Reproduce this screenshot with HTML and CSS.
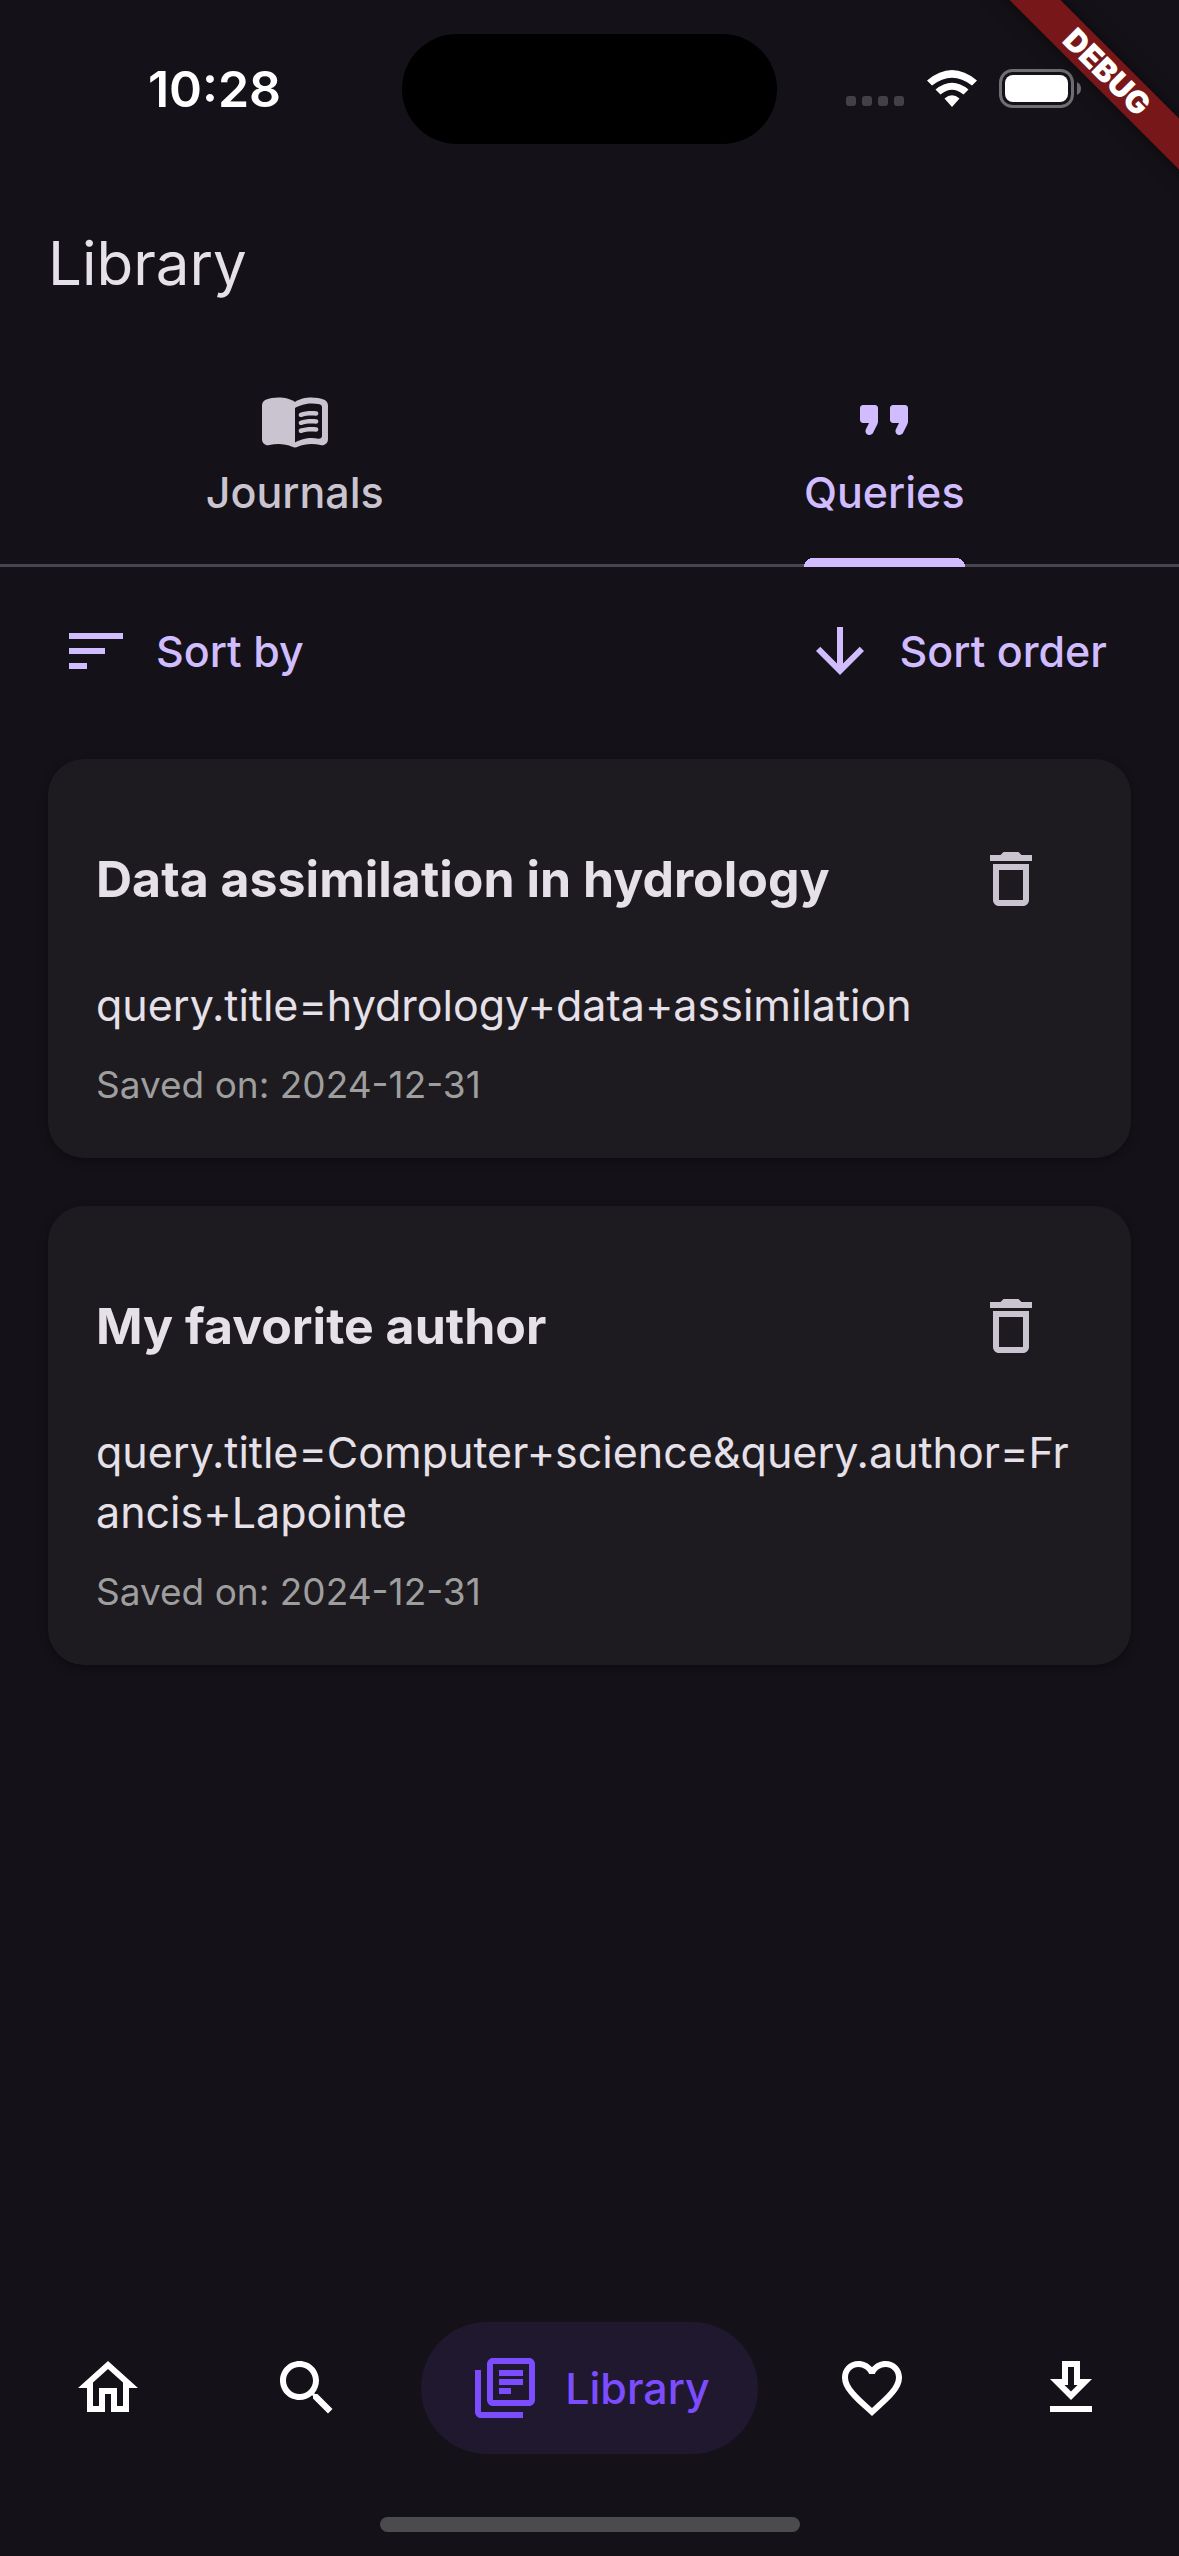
FILE: index.html
```html
<!DOCTYPE html>
<html lang="en">
<head>
<meta charset="utf-8">
<meta name="viewport" content="width=device-width, initial-scale=1">
<title>Library</title>
<link rel="stylesheet" href="styles.css">
</head>
<body>
<div class="app">
  <div class="status-bar">
    <div class="status-side"><time class="clock">10:28</time></div>
    <div class="island"></div>
    <div class="status-side status-icons">
      <span class="dots"><i></i><i></i><i></i><i></i></span>
      <svg class="wifi" viewBox="0 0 50 37" aria-hidden="true">
        <path d="M0 10.500Q25-10.500 50 10.500L45 15.500Q25 0 5 15.500Z"/>
        <path d="M8.500 19.500Q25 6 41.500 19.500L36.500 24.500Q25 15 13.500 24.500Z"/>
        <path d="M17.500 28.500Q25 22 32.500 28.500L25 37Z"/>
      </svg>
      <svg class="battery" viewBox="0 0 82 39" aria-hidden="true">
        <rect x="1.500" y="1.500" width="72" height="36" rx="12" fill="none" stroke="#6f6e72" stroke-width="3"/>
        <rect x="6" y="6" width="63" height="27" rx="8" fill="#fff"/>
        <path d="M78 13q4 2 4 6.500t-4 6.500z" fill="#6f6e72"/>
      </svg>
    </div>
  </div>
  <div class="debug-corner"><span class="debug-banner">DEBUG</span></div>

  <header class="app-bar"><h1>Library</h1></header>

  <div class="tabs" role="tablist">
    <button class="tab" role="tab" aria-selected="false">
      <svg class="icon" viewBox="0 0 24 24" aria-hidden="true"><path fill-rule="evenodd" d="M17.500 4.500c-1.950 0-4.050.4-5.500 1.500-1.450-1.100-3.550-1.500-5.500-1.500-1.450 0-2.990.22-4.280.79C1.490 5.620 1 6.330 1 7.140v11.280c0 1.300 1.220 2.260 2.480 1.940.98-.25 2.020-.36 3.020-.36 1.560 0 3.220.26 4.560.92.6.3 1.280.3 1.870 0 1.340-.67 3-.92 4.560-.92 1 0 2.040.11 3.020.36 1.260.33 2.480-.63 2.480-1.940V7.140c0-.81-.49-1.520-1.220-1.850-1.280-.57-2.820-.79-4.270-.79zM21 17.230c0 .63-.58 1.090-1.200.98-.75-.14-1.530-.2-2.300-.2-1.700 0-4.150.65-5.500 1.500V8c1.350-.85 3.800-1.500 5.500-1.500.92 0 1.830.09 2.700.28.46.1.8.51.8.98v9.470z"/><g id="line"><path d="M13.980 11.010c-.32 0-.61-.2-.71-.52-.13-.39.09-.82.48-.94 1.540-.5 3.530-.66 5.360-.45.41.05.71.42.66.83-.05.41-.42.71-.83.66-1.620-.19-3.390-.04-4.730.39-.08.01-.16.03-.23.030z"/></g><use href="#line" y="2.660"/><use href="#line" y="5.320"/></svg>
      <span class="tab-label">Journals</span>
    </button>
    <button class="tab tab-active" role="tab" aria-selected="true">
      <svg class="icon" viewBox="0 0 24 24" aria-hidden="true"><path d="M7.170 17c.51 0 .98-.29 1.200-.74l1.420-2.840c.14-.28.21-.58.21-.89V8c0-.55-.45-1-1-1H5c-.55 0-1 .45-1 1v4c0 .55.45 1 1 1h2l-1.030 2.060c-.45.89.2 1.940 1.200 1.940zm10 0c.51 0 .98-.29 1.200-.74l1.420-2.840c.14-.28.21-.58.21-.89V8c0-.55-.45-1-1-1h-4c-.55 0-1 .45-1 1v4c0 .55.45 1 1 1h2l-1.030 2.060c-.45.89.2 1.940 1.200 1.940z"/></svg>
      <span class="tab-label">Queries</span>
    </button>
  </div>

  <div class="toolbar">
    <button class="text-button">
      <svg class="icon" viewBox="0 0 24 24" aria-hidden="true"><path d="M3 18h6v-2H3v2zM3 6v2h18V6H3zm0 7h12v-2H3v2z"/></svg>
      <span>Sort by</span>
    </button>
    <button class="text-button">
      <svg class="icon" viewBox="0 0 24 24" aria-hidden="true"><path d="M20 12l-1.410-1.410L13 16.170V4h-2v12.170l-5.580-5.590L4 12l8 8 8-8z"/></svg>
      <span>Sort order</span>
    </button>
  </div>

  <main class="queries">
    <article class="card">
      <div class="card-head">
        <h2>Data assimilation in hydrology</h2>
        <button class="icon-button" aria-label="Delete query">
          <svg class="icon" viewBox="0 0 24 24" aria-hidden="true"><path d="M6 19c0 1.100.9 2 2 2h8c1.100 0 2-.9 2-2V7H6v12zM8 9h8v10H8V9zm7.500-5l-1-1h-5l-1 1H5v2h14V4z"/></svg>
        </button>
      </div>
      <p class="query">query.title=hydrology+data+assimilation</p>
      <p class="saved">Saved on: 2024-12-31</p>
    </article>
    <article class="card">
      <div class="card-head">
        <h2>My favorite author</h2>
        <button class="icon-button" aria-label="Delete query">
          <svg class="icon" viewBox="0 0 24 24" aria-hidden="true"><path d="M6 19c0 1.100.9 2 2 2h8c1.100 0 2-.9 2-2V7H6v12zM8 9h8v10H8V9zm7.500-5l-1-1h-5l-1 1H5v2h14V4z"/></svg>
        </button>
      </div>
      <p class="query">query.title=Computer+science&amp;query.author=Francis+Lapointe</p>
      <p class="saved">Saved on: 2024-12-31</p>
    </article>
  </main>

  <nav class="bottom-nav" aria-label="Main">
    <a class="nav-item" href="#home" aria-label="Home">
      <svg class="icon" viewBox="0 0 24 24" aria-hidden="true"><path d="M12 5.690l5 4.500V18h-2v-6H9v6H7v-7.810l5-4.500M12 3L2 12h3v8h6v-6h2v6h6v-8h3L12 3z"/></svg>
    </a>
    <a class="nav-item" href="#search" aria-label="Search">
      <svg class="icon" viewBox="0 0 24 24" aria-hidden="true"><path d="M15.500 14h-.79l-.28-.27C15.410 12.590 16 11.110 16 9.500 16 5.910 13.090 3 9.500 3S3 5.910 3 9.500 5.910 16 9.500 16c1.610 0 3.090-.59 4.230-1.570l.27.28v.79l5 4.990L20.490 19l-4.990-5zm-6 0C7.010 14 5 11.990 5 9.500S7.010 5 9.500 5 14 7.010 14 9.500 11.990 14 9.500 14z"/></svg>
    </a>
    <a class="nav-item nav-current" href="#library" aria-current="page">
      <svg class="icon" viewBox="0 0 24 24" aria-hidden="true"><path d="M4 6H2v14c0 1.100.9 2 2 2h14v-2H4V6zM20 2H8c-1.100 0-2 .9-2 2v12c0 1.100.9 2 2 2h12c1.100 0 2-.9 2-2V4c0-1.100-.9-2-2-2zm0 14H8V4h12v12zM10 6h8v2h-8zM10 9h8v2h-8zM10 12h4v2h-4z"/></svg>
      <span>Library</span>
    </a>
    <a class="nav-item" href="#favorites" aria-label="Favorites">
      <svg class="icon" viewBox="0 0 24 24" aria-hidden="true"><path d="M16.500 3c-1.740 0-3.410.81-4.500 2.090C10.910 3.810 9.240 3 7.500 3 4.420 3 2 5.420 2 8.500c0 3.780 3.400 6.860 8.550 11.540L12 21.350l1.450-1.320C18.600 15.360 22 12.280 22 8.500 22 5.420 19.580 3 16.500 3zm-4.400 15.550l-.1.100-.1-.1C7.140 14.240 4 11.390 4 8.500 4 6.500 5.500 5 7.500 5c1.540 0 3.040.99 3.570 2.360h1.870C13.460 5.990 14.960 5 16.500 5c2 0 3.500 1.500 3.500 3.500 0 2.890-3.140 5.740-7.900 10.050z"/></svg>
    </a>
    <a class="nav-item" href="#downloads" aria-label="Downloads">
      <svg class="icon" viewBox="0 0 24 24" aria-hidden="true"><path d="M19 9h-4V3H9v6H5l7 7 7-7zm-8 2V5h2v6h1.170L12 13.170 9.830 11H11zm-6 7h14v2H5z"/></svg>
    </a>
  </nav>
  <div class="home-indicator"></div>
</div>
</body>
</html>
```

FILE: styles.css
```css
* {
  box-sizing: border-box;
}

body {
  margin: 0;
  background: #141218;
  color: #e6e0e9;
  font-family: Inter, "Liberation Sans", sans-serif;
  font-size: 43px;
  line-height: 60px;
}

h1,
h2,
p {
  margin: 0;
}

button {
  margin: 0;
  border: 0;
  padding: 0;
  background: none;
  color: inherit;
  font: inherit;
}

.app {
  position: relative;
  display: flex;
  flex-direction: column;
  min-height: 100vh;
  overflow: hidden;
}

.icon {
  flex: none;
  width: 72px;
  height: 72px;
  fill: currentColor;
}

/* Status bar */
.status-bar {
  display: grid;
  grid-template-columns: 1fr 375px 1fr;
  align-items: center;
  height: 177px;
  color: #fff;
}

.status-side {
  display: flex;
  justify-content: center;
  padding-left: 27px;
}

.clock {
  font-size: 50px;
  font-weight: 600;
}

.island {
  height: 110px;
  border-radius: 55px;
  background: #000;
}

.status-icons {
  justify-content: flex-end;
  align-items: flex-end;
  gap: 22px;
  padding: 0 98px 0 0;
}

.dots {
  display: flex;
  gap: 6px;
  padding: 0 1px 2px 0;
}

.dots i {
  width: 10px;
  height: 10px;
  border-radius: 3px;
  background: #434146;
}

.wifi {
  width: 50px;
  height: 37px;
  margin-bottom: 1px;
  fill: #fff;
}

.battery {
  width: 82px;
  height: 39px;
}

/* Corner ribbon, laid over the status bar */
.debug-corner {
  position: absolute;
  top: 0;
  right: 0;
  width: 216px;
  height: 216px;
  overflow: hidden;
}

.debug-banner {
  position: absolute;
  top: 54px;
  right: -108px;
  width: 360px;
  background: #781719;
  box-shadow: 0 0 18px rgba(0, 0, 0, 0.5);
  color: #fff;
  font-size: 31px;
  font-weight: 900;
  line-height: 36px;
  text-align: center;
  transform: rotate(45deg);
}

/* Title and tabs */
.app-bar {
  padding: 44px 48px 40px;
}

.app-bar h1 {
  font-size: 60px;
  font-weight: 400;
  line-height: 84px;
}

.tabs {
  display: flex;
  box-shadow: inset 0 -3px #49454f;
}

.tab {
  display: flex;
  flex: 1;
  flex-direction: column;
  align-items: center;
  gap: 6px;
  padding-top: 39px;
  color: #cac4d0;
  font-weight: 500;
}

.tab-label {
  padding-bottom: 45px;
}

.tab-active {
  color: #d0bcff;
}

.tab-active .tab-label {
  background: radial-gradient(circle at 9px 9px, #d0bcff 9px, transparent 9px) 0 100% / 9px 9px no-repeat,
    radial-gradient(circle at 0 9px, #d0bcff 9px, transparent 9px) 100% 100% / 9px 9px no-repeat,
    linear-gradient(#d0bcff, #d0bcff) 50% 100% / calc(100% - 18px) 9px no-repeat;
}

/* Sorting */
.toolbar {
  display: flex;
  justify-content: space-between;
  padding: 12px 36px 36px 24px;
}

.text-button {
  display: flex;
  align-items: center;
  gap: 24px;
  height: 144px;
  padding: 0 36px;
  color: #d0bcff;
  font-weight: 500;
}

/* Saved queries */
.queries {
  display: flex;
  flex: 1;
  flex-direction: column;
  gap: 48px;
  padding: 0 48px 48px;
}

.card {
  display: flex;
  flex-direction: column;
  gap: 24px;
  padding: 48px;
  border-radius: 36px;
  background: #1d1b20;
  box-shadow: 0 3px 9px rgba(0, 0, 0, 0.35);
}

.card-head {
  display: flex;
  align-items: center;
  justify-content: space-between;
}

.card h2 {
  font-size: 50px;
  font-weight: 700;
}

.icon-button {
  display: grid;
  place-items: center;
  width: 144px;
  height: 144px;
  color: #cac4d0;
}

.query {
  word-break: break-all;
}

.saved {
  color: #9e9e9e;
  font-size: 37px;
  line-height: 51px;
}

/* Bottom navigation */
.bottom-nav {
  display: flex;
  justify-content: space-between;
  padding: 0 24px;
}

.nav-item {
  display: flex;
  align-items: center;
  gap: 24px;
  height: 132px;
  padding: 0 48px;
  border-radius: 66px;
  color: #fff;
  font-weight: 500;
  text-decoration: none;
}

.nav-current {
  background: #20182f;
  color: #7c4dff;
}

.home-indicator {
  align-self: center;
  width: 420px;
  height: 15px;
  margin: 63px 0 24px;
  border-radius: 8px;
  background: #4b4a4c;
}
```
